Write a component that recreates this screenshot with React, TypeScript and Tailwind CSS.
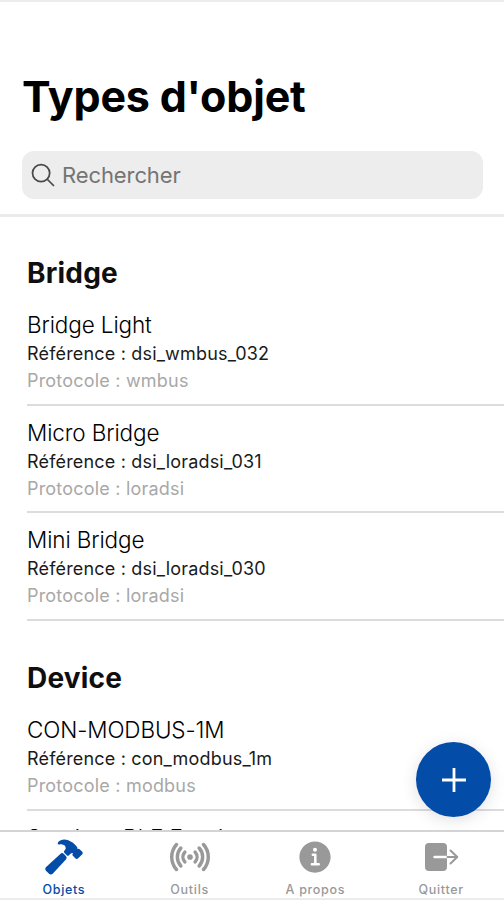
import React, { useState } from 'react';
import { IoHammer, IoInformationCircle, IoRadio, IoSearchOutline } from 'react-icons/io5';

interface ObjectType {
  name: string;
  reference: string;
  protocol: string;
}

interface Section {
  title: string;
  items: ObjectType[];
}

const sections: Section[] = [
  {
    title: 'Bridge',
    items: [
      { name: 'Bridge Light', reference: 'dsi_wmbus_032', protocol: 'wmbus' },
      { name: 'Micro Bridge', reference: 'dsi_loradsi_031', protocol: 'loradsi' },
      { name: 'Mini Bridge', reference: 'dsi_loradsi_030', protocol: 'loradsi' },
    ],
  },
  {
    title: 'Device',
    items: [
      { name: 'CON-MODBUS-1M', reference: 'con_modbus_1m', protocol: 'modbus' },
      { name: 'Services BLE Essai', reference: 'services_ble', protocol: 'ble' },
    ],
  },
];

// Filled door with a thin arrow leaving it
function ExitIcon({ className }: { className?: string }) {
  return (
    <svg className={className} viewBox="0 0 40 40" fill="none" strokeLinecap="round" strokeLinejoin="round">
      <rect x="4" y="6" width="22" height="28" rx="4" fill="currentColor" />
      <path d="M13.5 20H26" stroke="white" strokeWidth="2.4" />
      <path d="M26.5 20H36M29.5 13.5L36.3 20l-6.8 6.5" stroke="currentColor" strokeWidth="2" />
    </svg>
  );
}

const tabs = [
  { label: 'Objets', icon: IoHammer },
  { label: 'Outils', icon: IoRadio },
  { label: 'A propos', icon: IoInformationCircle },
  { label: 'Quitter', icon: ExitIcon },
];

function ObjectRow({ item }: { item: ObjectType }) {
  return (
    <li className="ml-[27px] h-[107.7px] border-b-2 border-[#dcdcdc] pt-[12px]">
      <p className="text-[22.5px] leading-[30px] font-light tracking-[-0.12px] text-black">{item.name}</p>
      <p className="text-[18px] leading-[27px] tracking-[0.18px] text-[#1a1a1a]">Référence : {item.reference}</p>
      <p className="text-[18px] leading-[27px] tracking-[0.2px] text-[#a8a8a8]">Protocole : {item.protocol}</p>
    </li>
  );
}

export default function App() {
  const [activeTab, setActiveTab] = useState('Objets');
  const [search, setSearch] = useState('');

  return (
    <div className="relative flex h-[900px] w-[504px] flex-col overflow-hidden border-t-2 border-[#ececec] bg-white font-['Inter',sans-serif]">
      {/* Header */}
      <header className="shrink-0 border-b-[3px] border-[#ebebeb] px-[22px] pt-[69px] pb-[15px]">
        <h1 className="text-[43px] leading-[50px] font-bold tracking-[-0.2px] text-black">Types d'objet</h1>
        <label className="mt-[30px] flex h-12 w-[461px] items-center rounded-xl bg-[#ededed] pl-[7px]">
          <IoSearchOutline className="size-7 text-[#4a4a4a]" />
          <input
            value={search}
            onChange={(e) => setSearch(e.target.value)}
            placeholder="Rechercher"
            className="ml-[5px] flex-1 bg-transparent text-[22px] tracking-[-0.1px] text-[#222] outline-none placeholder:text-[#747474]"
          />
        </label>
      </header>

      {/* Object list */}
      <main className="-mt-px min-h-0 flex-1 overflow-hidden">
        {sections.map((section) => (
          <section key={section.title}>
            <h2 className="h-[82px] pt-[39px] pl-[27px] text-[28px] leading-[36px] font-bold tracking-[0.2px] text-[#0f0f0f]">
              {section.title}
            </h2>
            <ul>
              {section.items.map((item) => (
                <ObjectRow key={item.name} item={item} />
              ))}
            </ul>
          </section>
        ))}
      </main>

      {/* Add button */}
      <button
        aria-label="Ajouter"
        className="absolute top-[740px] right-[13px] flex size-[75px] items-center justify-center rounded-full bg-[#034ca8] shadow-[0_3px_16px_rgba(0,0,0,0.12)]"
      >
        <svg className="size-6" viewBox="0 0 24 24" stroke="white" strokeWidth="2.8" fill="none">
          <path d="M12 0v24M0 12h24" />
        </svg>
      </button>

      {/* Tab bar */}
      <nav className="flex h-[70px] shrink-0 border-t-2 border-b-2 border-t-[#d4d4d4] border-b-[#ececec] pl-px">
        {tabs.map(({ label, icon: Icon }) => (
          <button
            key={label}
            onClick={() => setActiveTab(label)}
            className={`flex flex-1 flex-col items-center pt-[5px] ${
              label === activeTab ? 'text-[#034ca8]' : 'text-[#999]'
            }`}
          >
            <Icon className="size-10" />
            <span className="mt-[5px] text-[12.5px] leading-4 font-medium tracking-[0.7px]">{label}</span>
          </button>
        ))}
      </nav>
    </div>
  );
}
